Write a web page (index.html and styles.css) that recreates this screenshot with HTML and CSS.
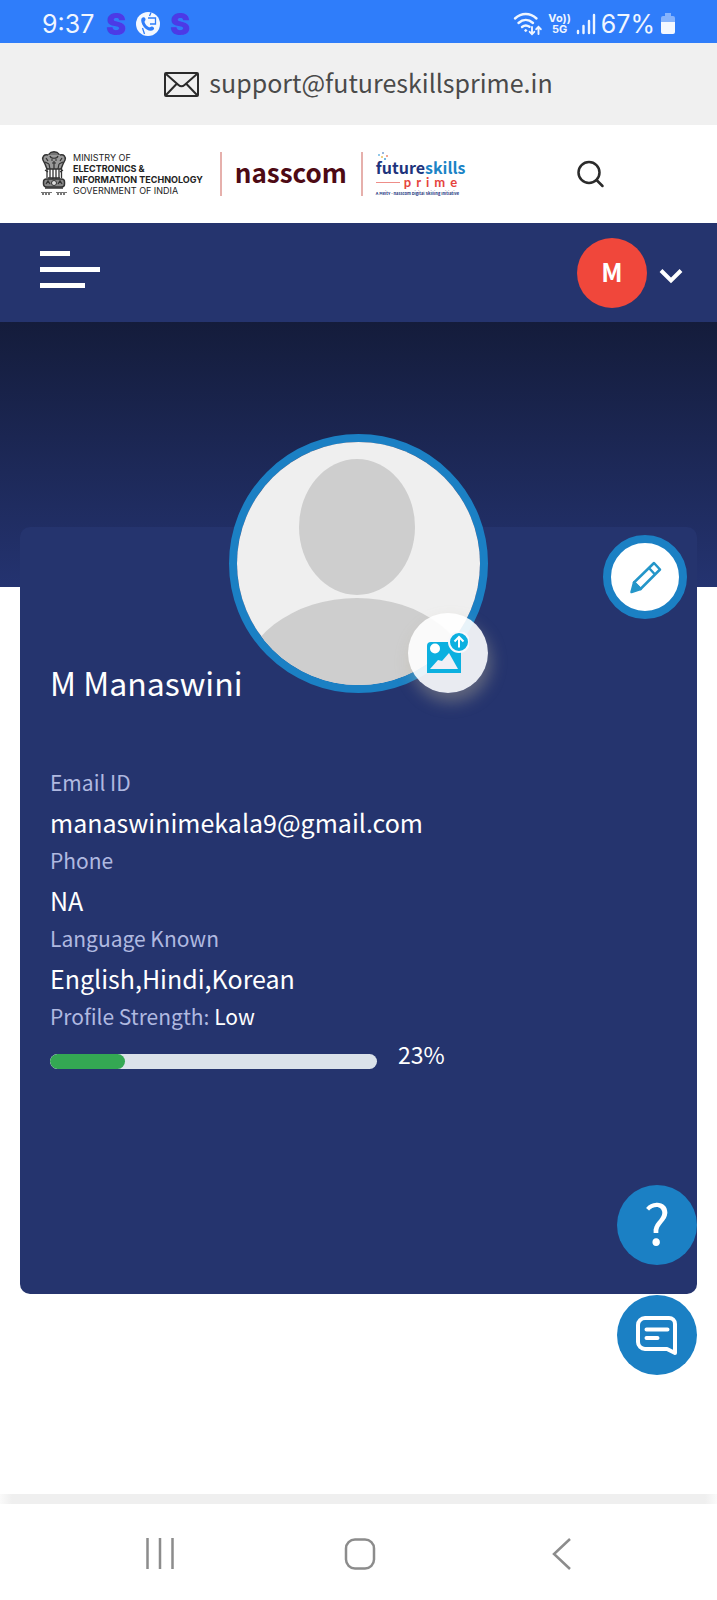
FILE: index.html
```html
<!DOCTYPE html>
<html lang="en">
<head>
<meta charset="utf-8">
<meta name="viewport" content="width=device-width, initial-scale=1">
<title>FutureSkills Prime - Profile</title>
<link rel="stylesheet" href="styles.css">
</head>
<body>
<div class="status">
  <div class="status-left">
    <span class="clock">9:37</span>
    <span class="app-s">S</span>
    <svg class="call-icon" width="24" height="24" viewBox="0 0 24 24" aria-hidden="true">
      <circle cx="12" cy="12" r="12" fill="#f4f8ff"/>
      <path d="M5.500 6.500c1.500-2 3.500-1.500 4 .5.400 1.500-1.300 2-.9 3.300.7 2.300 2.200 4 4.400 5 1.200.4 1.800-1.300 3.200-.8 2.300.9 2.500 2.300 1 3.600-2.700 2-7.500-.3-9.700-3.600C5.700 11.800 4.600 8.500 5.500 6.500z" fill="#2f7dfa"/>
      <path d="M12 6h7.500v6H14M13.500 4l1.500-3.500M6.500 16l2 6" fill="none" stroke="#2f7dfa" stroke-width="1.300"/>
    </svg>
    <span class="app-s">S</span>
  </div>
  <div class="status-right">
    <svg width="30" height="24" viewBox="0 0 30 24" fill="none" stroke="#eef5ff" stroke-width="2.400" stroke-linecap="round" aria-hidden="true">
      <path d="M2 6.500c6.500-6 15-6 21.500 0M5.500 11c4.500-4 10-4 14.500 0M9 15c2.500-2 5-2 7.500-.2"/>
      <circle cx="12.700" cy="18.500" r="1" fill="#eef5ff" stroke-width="1"/>
      <path d="M19 15v7m-2.300-2.200L19 22.200l2.300-2.400M25.500 22v-7m-2.300 2.200 2.300-2.400 2.300 2.400" stroke-width="1.900"/>
    </svg>
    <span class="volte"><span>Vo))</span><span>5G</span></span>
    <svg width="20" height="22" viewBox="0 0 20 22" stroke="#eef5ff" stroke-width="2.400" stroke-linecap="round" aria-hidden="true">
      <path d="M2 18v2M7.500 13v7M13 8v12M18 2v18"/>
    </svg>
    <span class="clock">67%</span>
    <svg width="16" height="22" viewBox="0 0 16 22" aria-hidden="true">
      <path d="M5 0h6v3h2a2 2 0 0 1 2 2v5H1V5a2 2 0 0 1 2-2h2z" fill="#85b3fc"/>
      <path d="M1 9h14v10a2 2 0 0 1-2 2H3a2 2 0 0 1-2-2z" fill="#f4f8ff"/>
    </svg>
  </div>
</div>

<div class="support">
  <svg width="35" height="25" viewBox="0 0 35 25" fill="none" stroke="#2b2b2b" stroke-width="2" stroke-linejoin="round" aria-hidden="true">
    <rect x="1" y="1" width="33" height="23" rx="1"/>
    <path d="M2 2l12.500 11c2 1.700 4 1.700 6 0L33 2M2 23l10.500-11M33 23L22.500 12"/>
  </svg>
  <a href="mailto:support@futureskillsprime.in">support@futureskillsprime.in</a>
</div>

<header class="brand">
  <div class="logos">
    <div class="ministry">
      <svg width="28" height="46" viewBox="0 0 28 46" fill="none" stroke="#333" aria-hidden="true">
        <path d="M9 3c2-3 8-3 10 0l1 4-2 6h-8L8 7z" fill="#777" stroke-width="1.300"/>
        <path d="M8 4C4 3 2 6 3 9l2 4 2 5h14l2-5 2-4c1-3-1-6-5-5" fill="#999" stroke-width="1.500"/>
        <path d="M10 5c1 3 7 3 8 0M11 9h2m2 0h2M12 12h4M6 7l2 3M22 7l-2 3M5 11l4 2M23 11l-4 2M9 13l1 5M14 10v8M19 13l-1 5" stroke-width="1.200"/>
        <path d="M7 17v10M10 18v9M13 18v10M16 18v10M19 18v9M21.500 17v10" stroke-width="1.300"/>
        <path d="M5 19l3 2M23 19l-3 2M8 27h12" stroke-width="1.300"/>
        <rect x="3.500" y="28" width="21" height="8" rx="3" fill="#888" stroke-width="1.500"/>
        <circle cx="14" cy="32" r="2.500" fill="#ddd" stroke-width="1"/>
        <path d="M6 33l2-3 2 3M18 33l2-3 2 3M5 37h18" stroke-width="1.300"/>
        <path d="M1 41.500h11M16 41.500h11" stroke-width="1" stroke="#777"/>
        <path d="M2 43h9M17 43h9" stroke-width="2" stroke="#777" stroke-dasharray="2 1"/>
      </svg>
      <p class="ministry-name">MINISTRY OF<br><b>ELECTRONICS &amp;<br>INFORMATION TECHNOLOGY</b><br>GOVERNMENT OF INDIA</p>
    </div>
    <div class="nasscom">nasscom</div>
    <div class="fsp">
      <svg class="sparks" width="12" height="8" viewBox="0 0 12 8" aria-hidden="true">
        <circle cx="2" cy="3" r="1" fill="#6fb6e0"/><circle cx="6" cy="1" r="1" fill="#7a9fd0"/>
        <circle cx="10" cy="4" r="1" fill="#ef8a70"/><circle cx="5" cy="5" r="1" fill="#e9c25d"/><circle cx="8" cy="7" r="1" fill="#4aa3d8"/>
      </svg>
      <div class="fsp-name">future<span>skills</span></div>
      <div class="fsp-prime">prime</div>
      <div class="fsp-tag">A MeitY - nasscom Digital Skilling Initiative</div>
    </div>
  </div>
  <button class="plain search" aria-label="Search">
    <svg width="28" height="28" viewBox="0 0 28 28" fill="none" stroke="#2b2b2b" stroke-width="2.500" stroke-linecap="round" aria-hidden="true">
      <circle cx="12" cy="12.500" r="10.500"/><path d="M19.500 20l6 6"/>
    </svg>
  </button>
</header>

<nav class="topnav">
  <button class="plain menu" aria-label="Menu"><span class="bar short"></span><span class="bar"></span><span class="bar mid"></span></button>
  <button class="plain account" aria-label="Account">
    <span class="initial">M</span>
    <svg width="24" height="16" viewBox="0 0 24 16" fill="none" stroke="#fff" stroke-width="4" aria-hidden="true"><path d="M2 2.500l10 10 10-10"/></svg>
  </button>
</nav>

<main class="content">
  <div class="banner"></div>
  <section class="card">
    <button class="edit" aria-label="Edit profile">
      <svg width="34" height="34" viewBox="0 0 34 34" fill="none" stroke="#2496c9" stroke-width="2.500" stroke-linejoin="round" aria-hidden="true">
        <path d="M6 22.500L26 3l6 6.500L12.500 29zM21 8l6 6.500"/>
        <path d="M6 22.500l6.500 6.500-9 3z" fill="#2496c9"/>
      </svg>
    </button>
    <div class="avatar">
      <svg class="photo" viewBox="0 0 243 243" role="img" aria-label="Profile photo">
        <rect width="243" height="243" fill="#efefef"/>
        <ellipse cx="120" cy="85" rx="58" ry="68" fill="#cecece"/>
        <ellipse cx="120" cy="246" rx="117" ry="90" fill="#cecece"/>
      </svg>
      <button class="upload" aria-label="Upload photo">
        <svg width="42" height="42" viewBox="0 0 42 42" aria-hidden="true">
          <path d="M4 10h30v31H0V14a4 4 0 0 1 4-4z" fill="#0cb0e0"/>
          <circle cx="8" cy="16.500" r="5" fill="#fff"/>
          <path d="M3 37l8-9 4 1 7-8 9 16z" fill="#f0f0f6"/>
          <circle cx="32" cy="10" r="10" fill="#0cb0e0" stroke="#f8f8fc" stroke-width="2"/>
          <path d="M32 15.500V5.500M27.500 9.500L32 5l4.500 4.500" fill="none" stroke="#fff" stroke-width="2"/>
        </svg>
      </button>
    </div>
    <h1 class="name">M Manaswini</h1>
    <dl class="details">
      <dt>Email ID</dt><dd>manaswinimekala9@gmail.com</dd>
      <dt>Phone</dt><dd>NA</dd>
      <dt>Language Known</dt><dd>English,Hindi,Korean</dd>
    </dl>
    <p class="strength">Profile Strength: <span>Low</span></p>
    <div class="meter">
      <div class="track" role="progressbar" aria-label="Profile strength" aria-valuenow="23" aria-valuemin="0" aria-valuemax="100"><div class="fill" style="width:23%"></div></div>
      <span class="percent">23%</span>
    </div>
  </section>
</main>

<div class="floating">
  <button class="help" aria-label="Help">?</button>
  <button class="chat" aria-label="Chat">
    <svg width="42" height="40" viewBox="0 0 42 40" fill="none" stroke="#fff" stroke-width="4" stroke-linejoin="round" stroke-linecap="round" aria-hidden="true">
      <path d="M9 3h24a6 6 0 0 1 6 6v29l-8-4H9a7 7 0 0 1-7-7V10a7 7 0 0 1 7-7z"/>
      <path d="M10.500 14.500h21M10.500 23h11"/>
    </svg>
  </button>
</div>

<div class="edge"></div>
<div class="sysnav">
  <button class="plain" aria-label="Recent apps"><svg width="32" height="32" viewBox="0 0 32 32" stroke="#8c8c8c" stroke-width="2.500" aria-hidden="true"><path d="M3.500 0v31M16 0v31M28.500 0v31"/></svg></button>
  <button class="plain" aria-label="Home"><svg width="34" height="32" viewBox="0 0 34 32" fill="none" stroke="#8c8c8c" stroke-width="2.500" aria-hidden="true"><rect x="4" y="1.500" width="28" height="29" rx="9"/></svg></button>
  <button class="plain" aria-label="Back"><svg width="32" height="32" viewBox="0 0 32 32" fill="none" stroke="#8c8c8c" stroke-width="2.500" aria-hidden="true"><path d="M28 1L12 16l16 15"/></svg></button>
</div>
</body>
</html>
```
FILE: styles.css
```css
* { box-sizing: border-box; }
body {
  margin: 0;
  min-height: 100vh;
  display: flex;
  flex-direction: column;
  background: #fff;
  color: #fff;
  font-family: "Noto Sans CJK SC", "Noto Sans", sans-serif;
}
button { font-family: inherit; color: inherit; padding: 0; border: 0; cursor: pointer; }
svg { display: block; flex: none; }
.plain { background: none; }

.status {
  height: 43px;
  padding: 5px 41px 0 42px;
  display: flex;
  align-items: center;
  justify-content: space-between;
  background: #2f7dfa;
  font-family: Inter, Roboto, sans-serif;
  line-height: 36px;
}
.status-left { display: flex; align-items: center; gap: 10px; }
.status-right { display: flex; align-items: center; gap: 5px; }
.clock { font-size: 25px; color: #f0f6ff; }
.status-left .clock { padding-right: 2px; }
.app-s { font-size: 30px; font-weight: 900; color: #4c3ae6; }
.volte {
  display: flex;
  flex-direction: column;
  align-items: center;
  font-size: 11px;
  font-weight: 700;
  line-height: 11px;
  color: #eef5ff;
}

.support {
  height: 82px;
  display: flex;
  align-items: center;
  justify-content: center;
  gap: 10px;
  background: #f0f0f0;
}
.support a {
  padding-bottom: 4px;
  font-size: 25px;
  line-height: 38px;
  color: #4a4a4a;
  text-decoration: none;
}

.brand {
  height: 98px;
  padding: 0 112px 0 40px;
  display: flex;
  align-items: center;
  justify-content: space-between;
}
.logos { display: flex; align-items: center; }
.ministry { display: flex; align-items: center; gap: 5px; padding-right: 17px; }
.ministry-name {
  margin: 0;
  font-family: Inter, sans-serif;
  font-size: 9px;
  line-height: 11px;
  color: #222;
  white-space: nowrap;
}
.nasscom {
  height: 44px;
  padding: 0 14px 0 13px;
  border-left: 2px solid #e6b0ac;
  border-right: 2px solid #e6b0ac;
  font-size: 26px;
  font-weight: 700;
  line-height: 40px;
  color: #4d0a14;
}
.fsp { position: relative; padding: 6px 0 0 13px; width: 104px; white-space: nowrap; }
.sparks { position: absolute; left: 14px; top: 0; }
.fsp-name { font-size: 16px; font-weight: 700; line-height: 18px; color: #20337c; }
.fsp-name span { color: #1c84c6; }
.fsp-prime {
  display: flex;
  align-items: center;
  gap: 4px;
  font-family: Lato, sans-serif;
  font-size: 13px;
  font-weight: 700;
  line-height: 12px;
  letter-spacing: 5px;
  color: #e5443d;
}
.fsp-prime::before { content: ""; width: 24px; height: 1px; background: #ee8d88; }
.fsp-tag { padding-top: 2px; font-size: 4px; font-weight: 700; line-height: 6px; color: #20337c; }

.topnav {
  height: 99px;
  padding: 0 34px 0 40px;
  display: flex;
  align-items: center;
  justify-content: space-between;
  background: #25346e;
}
.menu { display: flex; flex-direction: column; gap: 11px; width: 60px; padding-bottom: 7px; }
.bar { width: 60px; height: 5px; background: #fff; }
.bar.short { width: 30px; }
.bar.mid { width: 45px; }
.account { display: flex; align-items: center; gap: 12px; }
.account svg { margin-top: 6px; }
.initial {
  width: 70px;
  height: 70px;
  border-radius: 50%;
  background: #f0473b;
  font-size: 25px;
  font-weight: 700;
  line-height: 67px;
  text-align: center;
}

.content { flex: 1; padding-bottom: 180px; }
.banner { height: 265px; background: linear-gradient(#141c3b, #243370); }
.card {
  position: relative;
  margin: -60px 20px 0;
  padding: 0 30px 221px;
  border-radius: 10px;
  background: #25346e;
}
.edit {
  position: absolute;
  top: 8px;
  right: 10px;
  display: flex;
  align-items: center;
  justify-content: center;
  width: 84px;
  height: 84px;
  border: 8px solid #1b80c4;
  border-radius: 50%;
  background: #fff;
}
.avatar {
  position: relative;
  top: -93px;
  width: 259px;
  margin: 0 auto -128px;
  border: 8px solid #1b80c4;
  border-radius: 50%;
}
.photo { width: 100%; border-radius: 50%; }
.upload {
  position: absolute;
  right: -8px;
  bottom: -8px;
  width: 80px;
  height: 80px;
  padding: 0 0 0 19px;
  border-radius: 50%;
  background: rgba(255, 255, 255, 0.9);
  box-shadow: 3px 9px 16px rgba(190, 180, 150, 0.4);
}
.name { margin: 0 0 59px; font-size: 32px; font-weight: 400; line-height: 48px; }
.details { margin: 0; }
.details dt, .strength { margin: 0; font-size: 21px; line-height: 35px; color: #b0b9e0; }
.details dd { margin: 0; padding-top: 2px; font-size: 25px; line-height: 41px; }
.strength span { color: #fff; }
.meter { display: flex; align-items: flex-start; gap: 21px; padding-top: 2px; }
.track { width: 53%; height: 15px; margin-top: 18px; border-radius: 8px; overflow: hidden; background: #dbe2ea; }
.fill { height: 100%; border-radius: 8px; background: #34a853; }
.percent { font-size: 23px; line-height: 37px; }

.floating {
  position: fixed;
  right: 20px;
  bottom: 225px;
  display: flex;
  flex-direction: column;
  gap: 30px;
}
.help, .chat {
  display: flex;
  align-items: center;
  justify-content: center;
  width: 80px;
  height: 80px;
  border-radius: 50%;
  background: #1b80c4;
}
.help { font-size: 56px; line-height: 70px; padding-bottom: 8px; }

.edge { height: 10px; background: linear-gradient(90deg, #fafafa, #efefef 12px, #efefef calc(100% - 12px), #fafafa); }
.sysnav {
  height: 96px;
  padding: 3px 60px 0;
  display: grid;
  grid-template-columns: repeat(3, 1fr);
  align-items: center;
  justify-items: center;
}
```
